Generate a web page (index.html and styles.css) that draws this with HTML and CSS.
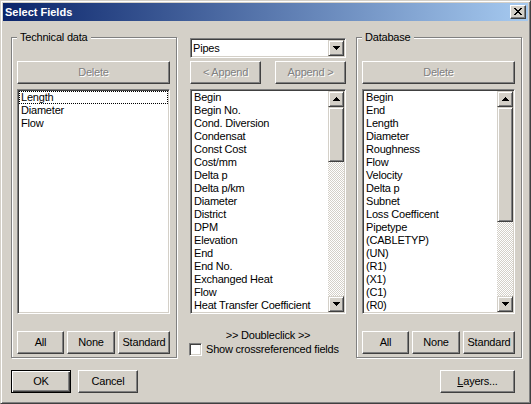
FILE: index.html
```html
<!DOCTYPE html>
<html>
<head>
<meta charset="utf-8">
<title>Select Fields</title>
<link rel="stylesheet" href="styles.css">
</head>
<body>
<div class="window">
  <div class="titlebar">
    <span class="title">Select Fields</span>
    <span class="close"><svg width="8" height="7" viewBox="0 0 8 7"><path d="M0 0h2v1h-2zM6 0h2v1h-2zM1 1h2v1h-2zM5 1h2v1h-2zM2 2h4v1h-4zM3 3h2v1h-2zM2 4h4v1h-4zM1 5h2v1h-2zM5 5h2v1h-2zM0 6h2v1h-2zM6 6h2v1h-2z"/></svg></span>
  </div>
  <div class="content">
    <div class="main">
      <div class="group">
        <div class="legend">Technical data</div>
        <div class="btn disabled wide">Delete</div>
        <div class="list">
          <div class="items">
            <div class="item focus">Length</div>
            <div class="item">Diameter</div>
            <div class="item">Flow</div>
          </div>
        </div>
        <div class="btnrow">
          <div class="btn w-all">All</div>
          <div class="btn w-none">None</div>
          <div class="btn w-std">Standard</div>
        </div>
      </div>

      <div class="middle">
        <div class="combo">
          <span class="ctext">Pipes</span>
          <span class="sbtn"><svg width="7" height="4" viewBox="0 0 7 4"><path d="M0 0h7v1h-1v1h-1v1h-1v1h-1v-1h-1v-1h-1v-1h-1z"/></svg></span>
        </div>
        <div class="arow">
          <div class="btn disabled w-app">&lt; Append</div>
          <div class="btn disabled w-app">Append &gt;</div>
        </div>
        <div class="list">
          <div class="items">
            <div class="item">Begin</div>
            <div class="item">Begin No.</div>
            <div class="item">Cond. Diversion</div>
            <div class="item">Condensat</div>
            <div class="item">Const Cost</div>
            <div class="item">Cost/mm</div>
            <div class="item">Delta p</div>
            <div class="item">Delta p/km</div>
            <div class="item">Diameter</div>
            <div class="item">District</div>
            <div class="item">DPM</div>
            <div class="item">Elevation</div>
            <div class="item">End</div>
            <div class="item">End No.</div>
            <div class="item">Exchanged Heat</div>
            <div class="item">Flow</div>
            <div class="item">Heat Transfer Coefficient</div>
          </div>
          <div class="sb">
            <span class="sbtn"><svg width="7" height="4" viewBox="0 0 7 4"><path d="M3 0h1v1h1v1h1v1h1v1h-7v-1h1v-1h1v-1h1z"/></svg></span>
            <span class="thumb thumb-mid"></span>
            <span class="track"></span>
            <span class="sbtn"><svg width="7" height="4" viewBox="0 0 7 4"><path d="M0 0h7v1h-1v1h-1v1h-1v1h-1v-1h-1v-1h-1v-1h-1z"/></svg></span>
          </div>
        </div>
        <div class="hint">&gt;&gt; Doubleclick &gt;&gt;</div>
        <div class="checkrow">
          <span class="checkbox"></span>
          <span class="clabel">Show crossreferenced fields</span>
        </div>
      </div>

      <div class="group right">
        <div class="legend">Database</div>
        <div class="btn disabled wide">Delete</div>
        <div class="list">
          <div class="items">
            <div class="item">Begin</div>
            <div class="item">End</div>
            <div class="item">Length</div>
            <div class="item">Diameter</div>
            <div class="item">Roughness</div>
            <div class="item">Flow</div>
            <div class="item">Velocity</div>
            <div class="item">Delta p</div>
            <div class="item">Subnet</div>
            <div class="item">Loss Coefficent</div>
            <div class="item">Pipetype</div>
            <div class="item">(CABLETYP)</div>
            <div class="item">(UN)</div>
            <div class="item">(R1)</div>
            <div class="item">(X1)</div>
            <div class="item">(C1)</div>
            <div class="item">(R0)</div>
          </div>
          <div class="sb">
            <span class="sbtn"><svg width="7" height="4" viewBox="0 0 7 4"><path d="M3 0h1v1h1v1h1v1h1v1h-7v-1h1v-1h1v-1h1z"/></svg></span>
            <span class="thumb thumb-right"></span>
            <span class="track"></span>
            <span class="sbtn"><svg width="7" height="4" viewBox="0 0 7 4"><path d="M0 0h7v1h-1v1h-1v1h-1v1h-1v-1h-1v-1h-1v-1h-1z"/></svg></span>
          </div>
        </div>
        <div class="btnrow">
          <div class="btn w-all">All</div>
          <div class="btn w-none">None</div>
          <div class="btn w-std">Standard</div>
        </div>
      </div>
    </div>

    <div class="bottom">
      <div class="btn default w-ok">OK</div>
      <div class="btn w-cancel">Cancel</div>
      <div class="btn w-layers"><span><u>L</u>ayers...</span></div>
    </div>
  </div>
</div>
</body>
</html>
```

FILE: styles.css
```css
html, body {
  margin: 0;
  padding: 0;
  background: #d4d0c8;
}

body {
  font-family: "Liberation Sans", Arial, sans-serif;
  font-size: 11px;
  letter-spacing: -0.2px;
  color: #000;
}

.window {
  width: 531px;
  height: 404px;
  box-sizing: border-box;
  border: 1px solid;
  border-color: #d4d0c8 #404040 #404040 #d4d0c8;
  box-shadow: inset 1px 1px #fff, inset -1px -1px #808080;
  padding: 2px;
  background: #d4d0c8;
}

.titlebar {
  height: 18px;
  background: linear-gradient(to right, #0a246a, #a6caf0);
  display: flex;
  align-items: center;
  justify-content: space-between;
  padding: 0 2px;
}

.title {
  color: #fff;
  font-weight: bold;
  letter-spacing: 0;
  line-height: 13px;
}

.close {
  width: 16px;
  height: 14px;
  box-sizing: border-box;
  border: 1px solid;
  border-color: #fff #404040 #404040 #fff;
  box-shadow: inset -1px -1px #808080;
  background: #d4d0c8;
  display: flex;
  align-items: center;
  justify-content: center;
  padding-bottom: 1px;
}

.close svg, .sbtn svg {
  display: block;
  fill: #000;
}

.content {
  padding: 16px 0 0 8px;
}

.main {
  display: flex;
  align-items: flex-start;
}

.group {
  width: 166px;
  box-sizing: border-box;
  border: 1px solid #808080;
  box-shadow: inset 1px 1px #fff, 1px 1px #fff;
  padding: 0 6px 3px 5px;
}

.group.right {
  margin-left: 10px;
}

.legend {
  margin: -7px 0 0 0;
  padding: 0 3px;
  background: #d4d0c8;
  width: max-content;
  height: 13px;
  line-height: 13px;
}

.btn {
  box-sizing: border-box;
  height: 23px;
  border: 1px solid;
  border-color: #fff #404040 #404040 #fff;
  box-shadow: inset -1px -1px #808080;
  background: #d4d0c8;
  display: flex;
  align-items: center;
  justify-content: center;
  line-height: 13px;
  white-space: nowrap;
}

.btn.disabled {
  color: #808080;
  text-shadow: 1px 1px #fff;
}

.btn.default {
  border-color: #000;
  box-shadow: inset 1px 1px #fff, inset -1px -1px #404040, inset -2px -2px #808080;
}

.wide {
  margin-top: 17px;
}

.list {
  box-sizing: border-box;
  height: 225px;
  margin-top: 5px;
  border: 1px solid;
  border-color: #808080 #fff #fff #808080;
  box-shadow: inset 1px 1px #404040, inset -1px -1px #d4d0c8;
  background: #fff;
  padding: 1px;
  display: flex;
}

.items {
  flex: 1;
  min-width: 0;
}

.item {
  height: 13px;
  line-height: 13px;
  padding-left: 2px;
  white-space: nowrap;
  overflow: hidden;
}

.item.focus {
  outline: 1px dotted #000;
  outline-offset: -1px;
}

.sb {
  width: 16px;
  display: flex;
  flex-direction: column;
}

.sbtn, .thumb {
  box-sizing: border-box;
  border: 1px solid;
  border-color: #d4d0c8 #404040 #404040 #d4d0c8;
  box-shadow: inset 1px 1px #fff, inset -1px -1px #808080;
  background: #d4d0c8;
}

.sbtn {
  width: 16px;
  height: 16px;
  display: flex;
  align-items: center;
  justify-content: center;
  flex: none;
}

.thumb {
  flex: none;
}

.thumb-mid {
  height: 55px;
}

.thumb-right {
  height: 115px;
}

.track {
  flex: 1;
  background-color: #d4d0c8;
  background-image: conic-gradient(#fff 25%, #d4d0c8 0 50%, #fff 0 75%, #d4d0c8 0);
  background-size: 2px 2px;
}

.btnrow {
  margin-top: 17px;
  display: flex;
  gap: 3px;
}

.w-all { width: 47px; }
.w-none { width: 48px; }
.w-std { width: 52px; }

.middle {
  width: 156px;
  margin-left: 13px;
}

.combo {
  box-sizing: border-box;
  height: 20px;
  margin-top: 1px;
  border: 1px solid;
  border-color: #808080 #fff #fff #808080;
  box-shadow: inset 1px 1px #404040, inset -1px -1px #d4d0c8;
  background: #fff;
  padding: 1px;
  display: flex;
  align-items: center;
}

.ctext {
  flex: 1;
  padding-left: 1px;
  line-height: 13px;
}

.arow {
  margin-top: 3px;
  display: flex;
  justify-content: space-between;
}

.w-app { width: 71px; }

.hint {
  margin-top: 15px;
  line-height: 13px;
  text-align: center;
}

.checkrow {
  margin-top: 1px;
  display: flex;
  align-items: center;
  height: 13px;
}

.checkbox {
  box-sizing: border-box;
  width: 13px;
  height: 13px;
  border: 1px solid;
  border-color: #808080 #fff #fff #808080;
  box-shadow: inset 1px 1px #404040, inset -1px -1px #d4d0c8;
  background: #fff;
  margin-left: -1px;
}

.clabel {
  margin-left: 4px;
  line-height: 13px;
  white-space: nowrap;
}

.bottom {
  margin-top: 12px;
  padding-right: 13px;
  display: flex;
}

.w-ok { width: 60px; }
.w-cancel { width: 60px; margin-left: 7px; }
.w-layers { width: 75px; margin-left: auto; }
```
